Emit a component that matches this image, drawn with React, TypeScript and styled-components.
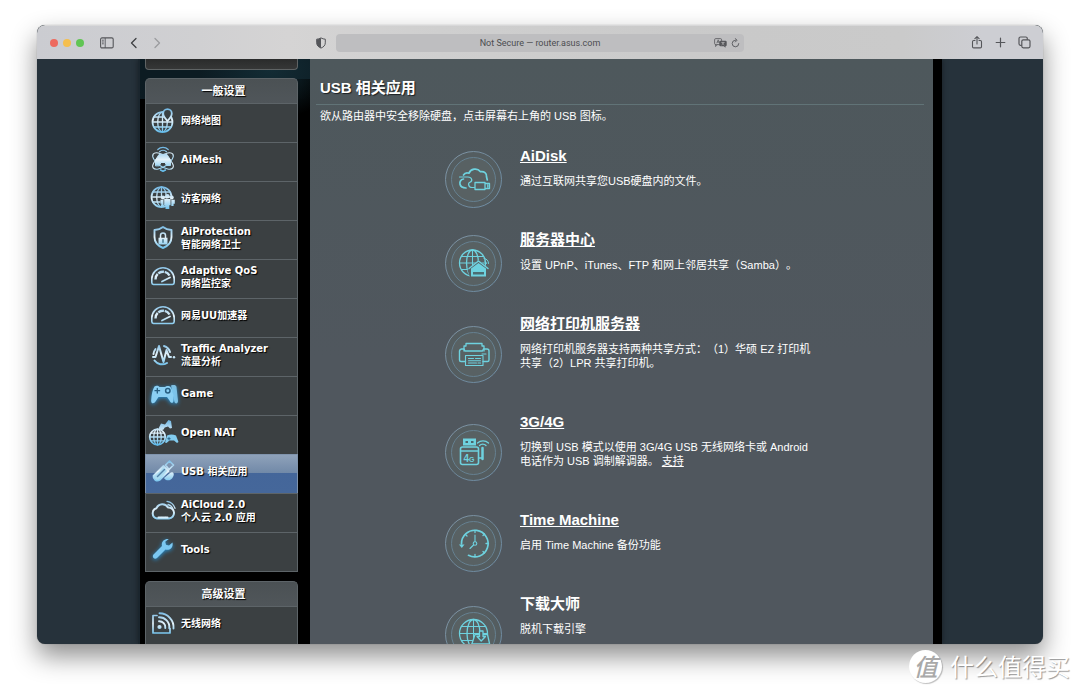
import React from "react";
import styled, { createGlobalStyle, css } from "styled-components";

const cjk = `"Noto Sans CJK SC", sans-serif`;

const GlobalStyle = createGlobalStyle`
  *, *::before, *::after { box-sizing: border-box; }
  html, body { margin: 0; background: #fff; }
  body { font-family: "Liberation Sans", Arial, ${cjk}; color: #fff; overflow: hidden; text-spacing-trim: space-all; }
  button { appearance: none; border: 0; padding: 0; background: none; color: inherit; font: inherit; cursor: pointer; }
  svg { display: block; }
`;

/* ---------- browser window ---------- */

const Desktop = styled.div`
  position: relative;
  display: flex;
  height: 100vh;
  padding: 25px 37px 49px;
`;

const BrowserWindow = styled.div`
  flex: 1;
  min-width: 0;
  display: flex;
  flex-direction: column;
  overflow: hidden;
  border-radius: 8px;
  background: #26323b;
  box-shadow: 0 0 1px rgba(0, 0, 0, 0.4), 0 12px 26px rgba(0, 0, 0, 0.45);
`;

const Toolbar = styled.header`
  flex: none;
  display: grid;
  grid-template-columns: 1fr minmax(0, 408px) 1fr;
  align-items: center;
  height: 34px;
  border-top: 1px solid #d8d8d9;
  border-radius: 8px 8px 0 0;
  background: linear-gradient(90deg, #cbccd1 0%, #d0d0d2 16%, #d5d4d4 25%, #cfcfcf 40%, #c9c9c9 70%, #cacaca 86%, #cdced3 94%);
  color: #55565a;
`;

const LeftTools = styled.div`
  display: flex;
  align-items: center;
  padding: 0 9px 0 13px;
`;

const Lights = styled.div`
  display: flex;
  gap: 5px;
  margin-right: 16px;
`;

const Light = styled.button<{ $color: string }>`
  width: 8px;
  height: 8px;
  border-radius: 50%;
  background: ${(p) => p.$color};
`;

const ToolButton = styled.button<{ $faded?: boolean }>`
  display: flex;
  align-items: center;
  justify-content: center;
  color: ${(p) => (p.$faded ? "#9b9c9f" : "inherit")};
`;

const NavButtons = styled.div`
  display: flex;
  gap: 11px;
  margin-left: 14px;
  margin-right: auto;
`;

const AddressBar = styled.div`
  display: grid;
  grid-template-columns: 30px 1fr 30px;
  align-items: center;
  height: 18px;
  border-radius: 4px;
  background: #bebec0;
`;

const AddressInput = styled.input`
  grid-column: 2;
  width: 100%;
  height: 18px;
  padding: 0;
  border: 0;
  outline: 0;
  background: transparent;
  color: #4c4d50;
  text-align: center;
  font: 9px Roboto, "Liberation Sans", sans-serif;
`;

const AddressActions = styled.div`
  display: flex;
  gap: 4px;
`;

const RightTools = styled.div`
  display: flex;
  justify-content: flex-end;
  align-items: center;
  gap: 12px;
  padding-right: 12px;
`;

/* ---------- router page ---------- */

const Page = styled.div`
  flex: 1;
  min-height: 0;
  overflow: hidden;
  display: flex;
  justify-content: center;
`;

const RouterLayout = styled.div`
  display: flex;
  align-items: flex-start;
  gap: 12px;
  width: 100%;
  max-width: 804px;
  padding: 0 9px 0 7px;
  border-left: 2px solid #1b262e;
  padding-left: 5px;
  background: radial-gradient(ellipse 70px 50px at 130px 10px, #132c35 0%, transparent 100%),
    linear-gradient(90deg, #0c1b22, #0c1b22) 0 0 / 180px 20px no-repeat,
    linear-gradient(90deg, #0c1b22, transparent 170px) 0 20px / 100% 20px no-repeat, #000;
  box-shadow: 0 0 6px rgba(0, 0, 0, 0.4);
`;

const Sidebar = styled.nav`
  flex: none;
  width: 153px;
`;

const QuickSetup = styled.div`
  height: 11px;
  margin-bottom: 8px;
  border: 1px solid #5f6364;
  border-top: 0;
  border-radius: 0 0 4px 4px;
  background: linear-gradient(#2a2b2b, #363737);
`;

const MenuGroup = styled.section`
  margin-bottom: 9px;
`;

const MenuHeading = styled.h2`
  height: 25px;
  margin: 0;
  padding-left: 4px;
  border: 1px solid #5d6468;
  border-bottom: 0;
  border-radius: 5px 5px 0 0;
  background: linear-gradient(#4b5154, #50565a);
  font: bold 11px/24px "Liberation Sans", ${cjk};
  text-align: center;
  text-shadow: 1px 1px 1px #000;
`;

const MenuList = styled.ul`
  margin: 0;
  padding: 0;
  list-style: none;
  border-bottom: 1px solid #5d6468;
`;

const MenuLink = styled.a<{ $active?: boolean }>`
  display: flex;
  align-items: center;
  gap: 5px;
  height: 39px;
  padding: 0 4px 5px 5px;
  border: 1px solid #5d6468;
  border-bottom: 0;
  background: #3b4042;
  color: #fff;
  text-decoration: none;
  white-space: nowrap;
  font: bold 10px/13px Verdana, "DejaVu Sans", ${cjk};
  text-shadow: 1px 1px 1px #000;
  ${(p) =>
    p.$active &&
    css`
      border-color: #8094ad;
      background: linear-gradient(#8fa2ba 0, #7189a8 47%, #44669a 47%, #45679a 100%);
    `}
`;

const Main = styled.main`
  flex: 1;
  min-width: 0;
  padding: 17px 9px 0 6px;
  background: linear-gradient(#4e585c, #50575e 300px);
`;

const PageTitle = styled.h1`
  margin: 0;
  padding: 0 4px 4px;
  border-bottom: 1px solid #617377;
  font-size: 15px;
  line-height: 24px;
  text-shadow: 1px 1px 1px #1c2022;
`;

const Intro = styled.p`
  margin: 3px 4px 15px;
  font-size: 11px;
  line-height: 16px;
`;

const Service = styled.section<{ $tall?: boolean }>`
  display: flex;
  align-items: center;
  gap: 18px;
  min-height: ${(p) => (p.$tall ? 98 : 84)}px;
  padding-left: 129px;
`;

const Emblem = styled.svg`
  flex: none;
  width: 57px;
  height: 57px;
  margin-bottom: 3px;
`;

const ServiceText = styled.div`
  align-self: flex-start;
  padding: 7px 0 35px;
  white-space: nowrap;
`;

const ServiceTitle = styled.h3`
  margin: 0 0 8px;
  font-size: 15px;
  line-height: 20px;
`;

const ServiceNote = styled.p`
  margin: 0;
  font-size: 11px;
  line-height: 14px;
`;

const TextLink = styled.a`
  color: inherit;
  text-decoration: underline;
`;

/* ---------- watermark ---------- */

const Watermark = styled.div`
  position: absolute;
  right: 10px;
  bottom: 10px;
  display: flex;
  align-items: center;
  gap: 8px;
  color: #fff;
  font: 400 24px/34px ${cjk};
  text-shadow: 1px 1px 1px rgba(0, 0, 0, 0.4);
`;

const Seal = styled.span`
  width: 33px;
  height: 33px;
  border-radius: 50%;
  background: #fff;
  box-shadow: 1px 1px 1px rgba(0, 0, 0, 0.25);
  color: #a9a9a9;
  font: italic 500 24px/32px ${cjk};
  text-align: center;
  text-shadow: none;
`;

/* ---------- menu icons ---------- */

const Globe = ({ x, y, r }: { x: number; y: number; r: number }) => (
  <g strokeWidth="1.3">
    <circle cx={x} cy={y} r={r} strokeWidth="1.7" />
    <ellipse cx={x} cy={y} rx={r * 0.48} ry={r} />
    <path d={`M${x} ${y - r}V${y + r}M${x - r} ${y}H${x + r}M${x - r * 0.86} ${y - r * 0.5}H${x + r * 0.86}M${x - r * 0.86} ${y + r * 0.5}H${x + r * 0.86}`} />
  </g>
);

const ink = "url(#menuInk)";
const hole = "#3b4042";

const menuArt: Record<string, React.ReactNode> = {
  map: (
    <>
      <Globe x={11.5} y={14} r={10} />
      <path d="M16.500 1.200a4.300 4.300 0 0 0-4.300 4.300c0 3 4.300 7.500 4.300 7.500s4.300-4.500 4.300-7.500a4.300 4.300 0 0 0-4.300-4.300z" fill={hole} strokeWidth="1.800" />
    </>
  ),
  mesh: (
    <>
      <path d="M8.500 4.700a5 5 0 0 1 7 0M6.800 2.500a7.500 7.500 0 0 1 10.400 0" strokeWidth="1.200" />
      <ellipse cx="12" cy="14" rx="12" ry="5.500" transform="rotate(35 12 14)" strokeWidth="1.100" />
      <ellipse cx="12" cy="14" rx="12" ry="5.500" transform="rotate(-35 12 14)" strokeWidth="1.100" />
      <path d="M4.500 18.500V13L8 7.500h8l3.500 5.500v5.500h-4l-1.500-3h-4l-1.500 3z" fill={ink} strokeWidth="1" />
      <path d="M9.500 23l2.500 1.200 2.500-1.200" />
    </>
  ),
  guest: (
    <>
      <Globe x={10.5} y={11} r={10} />
      <path d="M9.500 12.500h14v6h-14z" fill={hole} stroke="none" />
      <circle cx="12" cy="11.500" r="1.900" fill={ink} stroke="none" />
      <circle cx="20.800" cy="11.500" r="1.900" fill={ink} stroke="none" />
      <circle cx="16.400" cy="10.300" r="2.300" fill={ink} stroke="none" />
      <path d="M13.200 13h6.400v6.300h-1.300V23h-3.800v-3.700h-1.300zM9.500 13.800h3v6.200h-2v-2.200h-1zM20.300 13.800h3.500v4h-1.200V20h-2.300z" fill={ink} stroke="none" />
    </>
  ),
  shield: (
    <>
      <path d="M12 2c2.500 2 5 2.800 8.500 3v7c0 5-3.500 9-8.500 11-5-2-8.500-6-8.500-11V5C7 4.800 9.500 4 12 2z" strokeWidth="1.900" />
      <path d="M9.500 13v-2.500a2.500 2.500 0 0 1 5 0V13" strokeWidth="1.500" />
      <path d="M7.500 12.800h9v6.700h-9z" fill={ink} stroke="none" />
      <path d="M12 14.700v2.500" stroke="#47788f" strokeWidth="1.500" />
    </>
  ),
  gauge: (
    <>
      <path d="M2.500 20.500a2 2 0 0 1-1.700-2V15a11.200 11.200 0 0 1 22.400 0v3.500a2 2 0 0 1-1.700 2z" strokeWidth="1.600" />
      <path d="M4.500 15.500a7.500 7.500 0 0 1 14-4" strokeWidth="2.400" strokeDasharray="6 .8" strokeLinecap="butt" />
      <path d="M11 17.500l8-4" strokeWidth="1.800" />
    </>
  ),
  traffic: (
    <>
      <path d="M13 4a9 9 0 0 1 6 6M4.500 7A9.500 9.500 0 0 0 2.500 12M3.500 18.500A9.500 9.500 0 0 0 16 21" strokeWidth="2" />
      <path d="M2 15h2.500L8 4l4.500 16 3-12 2.500 7h2" strokeWidth="2" />
      <circle cx="23" cy="15.200" r="1.200" fill={ink} stroke="none" />
    </>
  ),
  game: (
    <g fill="#8bd0f4" stroke="none">
      <path d="M20 4.500c3-1 5-.5 5.500 1.500l1.500 14c0 3-3 3-3.500 1L22 15z" opacity=".85" />
      <path d="M3.500 5.500c2-1.200 4-.6 5 .5h5.500c1-1.100 4-1.700 5.500 0C22 10 23 15 22.500 20c-.5 3-3 2-4-.5L16 16H7.500L4.500 20.500C3 23-.2 23 .2 19c.3-5 1.300-10.500 3.300-13.500z" />
      <path d="M6.300 7.500v4.500M4 9.700h4.600" stroke="#285f82" strokeWidth="1.300" />
      <circle cx="16.800" cy="9.800" r="2.200" fill="none" stroke="#285f82" />
    </g>
  ),
  nat: (
    <>
      <Globe x={6.5} y={17} r={7.8} />
      <path d="M7.500 8.500l2.500-5 4 1L17.500 0 20 1l1 7-2 .5-2-2-3.200 1-1.500 2.300-2 .2z" fill={ink} stroke="none" />
      <path d="M16 15.500c3-1.500 6-1.500 9 0l2.500 6.500-1.500 1-3-2.500h-4.500L15.500 23l-1.500-.5z" fill="#82ccef" stroke="none" />
      <path d="M18 17.500v2.400M16.800 18.700h2.400" stroke="#285f82" strokeWidth=".9" />
    </>
  ),
  usb: (
    <>
      <path d="M2.500 17l10-10 5 5-9 9a4 4 0 0 1-6-4z" fill="#a9daf0" strokeWidth="1.800" />
      <path d="M14.500 6l4-4 4 4-4.500 4.500z" strokeWidth="1.700" />
      <path d="M6.500 17.500l7-7" stroke="#5481a8" strokeWidth="1.500" />
      <path d="M13 19l6-5c3-2 5 1 3 4-2 4-7 4.500-9 1z" fill={ink} stroke="none" />
    </>
  ),
  cloud: (
    <>
      <path d="M6 20.500a5.300 5.300 0 0 1-.5-10.300A6.500 6.500 0 0 1 17 9.500a5.500 5.500 0 0 1 1 11z" strokeWidth="2" />
      <path d="M7.500 19.500h9" stroke="#d8eefa" strokeWidth="2.200" strokeDasharray="3 .6" />
      <path d="M17 6.500a7 7 0 0 1 5 5M16 3.300a10 10 0 0 1 8 7" strokeWidth="1.300" />
    </>
  ),
  tools: (
    <path d="M21.500 5.500l-3.500 3-3-.8-.7-2.900L17.800 2C13 1.500 10 5 11 9L2.500 17.500c-2 2.500 1 5.500 3.500 3.500l8.500-8.500c4.500 1 8-2 7-7z" fill="#7bc8f2" stroke="none" />
  ),
  wifi: (
    <>
      <path d="M6 4.500H2v17.500h17v-4.500" strokeWidth="1.700" />
      <circle cx="8.500" cy="16" r="2.100" fill={ink} stroke="none" />
      <path d="M8 10.300a6 6 0 0 1 6.300 6.700M8 6.300a10 10 0 0 1 10.300 11M8.500 2.300A14 14 0 0 1 22.500 17.500" strokeWidth="1.900" />
    </>
  ),
};

const IconFrame = styled.svg<{ $glow: boolean }>`
  flex: none;
  width: 25px;
  height: 25px;
  overflow: visible;
  filter: ${(p) => (p.$glow ? "drop-shadow(0 1px 2px #2593d8)" : "none")};
`;

const MenuIcon = ({ name }: { name: string }) => (
  <IconFrame viewBox="0 0 25 25" fill="none" stroke={ink} strokeWidth="1.500" strokeLinecap="round" strokeLinejoin="round" $glow={name === "game" || name === "tools"} aria-hidden="true">
    {menuArt[name]}
  </IconFrame>
);

/* ---------- service emblems ---------- */

const cyan = "#6ed2df";

const emblemArt: Record<string, React.ReactNode> = {
  disk: (
    <>
      <path d="M18.500 24c1-1.800 3-2.500 5.500-1.800 1.500-4.200 8-6 11.500-1.500 3.500-.7 6.500 1.500 6 5l.8 3.300" strokeWidth="1.700" />
      <path d="M14.500 26h8.500c4 0 5 4 2 5.200-2.500 1-1.500 5.300 2 5.300h2.500" strokeWidth="1.200" />
      <path d="M18.500 28c-3 .5-4 3-3.500 5.300.6 2.500 3 3.700 6 3.700" strokeWidth="1.700" />
      <path d="M30 31.500h10v7H30zM40 32.500h4.500v5H40M42.800 34v2" />
    </>
  ),
  server: (
    <>
      <circle cx="27.500" cy="28" r="13" />
      <ellipse cx="27.500" cy="28" rx="6" ry="13" />
      <path d="M27.500 15v26M14.500 28h26M16.500 21.500h22M16.500 34.500h22" strokeWidth="1" />
      <path d="M22.500 35l11.500-10 11 10v7.500H25z" fill="#555f62" stroke="none" />
      <path d="M24 33.500l9.500-7.500 9.500 7.500" strokeWidth="1.500" />
      <path d="M26 33.500l7.500-5.500 7.500 5.500v8H26z" fill={cyan} stroke="none" />
      <path d="M28 37h11v2.500H28z" fill="#4b6d73" stroke="none" />
      <path d="M39 23.500a5 5 0 0 1 4.500 5M39.500 26a3 3 0 0 1 2 2.500" strokeWidth="1" />
    </>
  ),
  printer: (
    <>
      <path d="M19 25v-5h2v-2.500h16V20h2v5" />
      <path d="M20.500 35.500H16a1.500 1.500 0 0 1-1.500-1.500V25a2.500 2.500 0 0 1 2-2H19l1 2h17.500l1-2H42a2 2 0 0 1 2 2v9a1.500 1.500 0 0 1-1.500 1.500H38" strokeWidth="1.400" />
      <path d="M20.500 29.500h17.500v10H20.500zM23.500 32.500h5M30.500 32.500h5M23.500 34.800h12M23.500 37h8M33 37h2.500M37 28h4" strokeWidth="1.100" />
    </>
  ),
  modem: (
    <>
      <path d="M18 14.500h13v7H18z" fill={cyan} stroke="none" />
      <path d="M20.500 17h2.500v2h-2.500zM26 17h2.500v2H26z" fill="#4b666c" stroke="none" />
      <rect x="15.500" y="23" width="18" height="17.500" rx="2" strokeWidth="1.600" />
      <path d="M15.500 27h18" />
      <path d="M33.500 34h4" />
      <path d="M37.500 24v11" strokeWidth="2.500" />
      <path d="M34.500 21.500a4.500 4.500 0 0 1 6.500 0M32.500 19a8 8 0 0 1 11 0" />
      <text x="18.500" y="37.500" fill={cyan} stroke="none" fontFamily="Liberation Sans, sans-serif" fontWeight="700" fontSize="10">4<tspan fontSize="7">G</tspan></text>
    </>
  ),
  clock: (
    <>
      <path d="M16.500 29a13.300 13.300 0 1 1 7 11.300" strokeWidth="1.700" />
      <path d="M14 29.500h5.500l-2.700 3.500z" fill={cyan} stroke="none" />
      <circle cx="30" cy="28.500" r="1.800" strokeWidth="1.100" />
      <path d="M30 26.500V20M28.500 30l-3.500 3.500" strokeWidth="1.100" />
      <path d="M30 15.500v2M30 39.500v2M41 28.500h2.500M20.500 19.500l1.500 1.500M39.500 19l-1.500 1.500M39.500 38l-1.500-1.500" strokeWidth="1.300" />
    </>
  ),
  download: (
    <>
      <circle cx="28.500" cy="27.500" r="14" />
      <ellipse cx="28.500" cy="27.500" rx="6.500" ry="14" />
      <path d="M28.500 13.500v28M14.500 27.500h28M17 20.500h23M17 34.500h23" strokeWidth="1" />
      <path d="M30 28.500h12.500l2 9v5H27v-5z" fill="#555f62" />
      <path d="M34.500 25h3.500v5.500h2.500L36.200 35 32 30.500h2.500z" fill="#555f62" />
      <path d="M27 38h17.500" />
    </>
  ),
};

const ServiceEmblem = ({ name }: { name: string }) => (
  <Emblem viewBox="0 0 57 57" fill="none" aria-hidden="true">
    <circle cx="28.500" cy="28.500" r="28" fill="#545d60" stroke="url(#ringInk)" />
    <circle cx="28.500" cy="28.500" r="22" fill="#586163" stroke="#668191" />
    <g stroke={cyan} strokeWidth="1.300" strokeLinecap="round" strokeLinejoin="round">
      {emblemArt[name]}
    </g>
  </Emblem>
);

const InkDefs = styled.svg`
  position: absolute;
`;

const SharedInks = () => (
  <InkDefs width="0" height="0" aria-hidden="true">
    <defs>
      <linearGradient id="menuInk" gradientUnits="userSpaceOnUse" x1="0" y1="0" x2="0" y2="25">
        <stop offset="0" stopColor="#6bb4e2" />
        <stop offset=".5" stopColor="#e4f2fa" />
        <stop offset="1" stopColor="#5cb9ea" />
      </linearGradient>
      <linearGradient id="ringInk" x1="0" y1="0" x2="1" y2="1">
        <stop offset="0" stopColor="#8499a9" />
        <stop offset=".5" stopColor="#6d8698" />
        <stop offset="1" stopColor="#7291a9" />
      </linearGradient>
    </defs>
  </InkDefs>
);

/* ---------- data ---------- */

type Item = { icon: string; lines: string[]; active?: boolean };

const generalItems: Item[] = [
  { icon: "map", lines: ["网络地图"] },
  { icon: "mesh", lines: ["AiMesh"] },
  { icon: "guest", lines: ["访客网络"] },
  { icon: "shield", lines: ["AiProtection", "智能网络卫士"] },
  { icon: "gauge", lines: ["Adaptive QoS", "网络监控家"] },
  { icon: "gauge", lines: ["网易UU加速器"] },
  { icon: "traffic", lines: ["Traffic Analyzer", "流量分析"] },
  { icon: "game", lines: ["Game"] },
  { icon: "nat", lines: ["Open NAT"] },
  { icon: "usb", lines: ["USB 相关应用"], active: true },
  { icon: "cloud", lines: ["AiCloud 2.0", "个人云 2.0 应用"] },
  { icon: "tools", lines: ["Tools"] },
];

const advancedItems: Item[] = [{ icon: "wifi", lines: ["无线网络"] }];

const services: { icon: string; title: string; note: React.ReactNode; plain?: boolean }[] = [
  { icon: "disk", title: "AiDisk", note: "通过互联网共享您USB硬盘内的文件。" },
  { icon: "server", title: "服务器中心", note: "设置 UPnP、iTunes、FTP 和网上邻居共享（Samba）。" },
  { icon: "printer", title: "网络打印机服务器", note: <>网络打印机服务器支持两种共享方式：（1）华硕 EZ 打印机<br />共享（2）LPR 共享打印机。</> },
  { icon: "modem", title: "3G/4G", note: <>切换到 USB 模式以使用 3G/4G USB 无线网络卡或 Android<br />电话作为 USB 调制解调器。 <TextLink href="#support">支持</TextLink></> },
  { icon: "clock", title: "Time Machine", note: "启用 Time Machine 备份功能" },
  { icon: "download", title: "下载大师", note: "脱机下载引擎", plain: true },
];

const Menu = ({ title, items }: { title: string; items: Item[] }) => (
  <MenuGroup>
    <MenuHeading>{title}</MenuHeading>
    <MenuList>
      {items.map((item) => (
        <li key={item.lines[0]}>
          <MenuLink href={`#${item.icon}`} $active={item.active}>
            <MenuIcon name={item.icon} />
            <span>
              {item.lines.map((line, i) => (
                <React.Fragment key={line}>
                  {i > 0 && <br />}
                  {line}
                </React.Fragment>
              ))}
            </span>
          </MenuLink>
        </li>
      ))}
    </MenuList>
  </MenuGroup>
);

const BrowserToolbar = () => (
  <Toolbar>
    <LeftTools>
      <Lights>
        <Light $color="#ed6a5f" aria-label="Close" />
        <Light $color="#f5bf4f" aria-label="Minimize" />
        <Light $color="#61c554" aria-label="Zoom" />
      </Lights>
      <ToolButton aria-label="Sidebar">
        <svg width="14" height="12" viewBox="0 0 14 12" fill="none" stroke="currentColor">
          <rect x=".6" y=".9" width="12.600" height="10" rx="1.400" strokeWidth="1.100" />
          <path d="M5.200 1v10M2 3.200h1.800M2 5h1.800M2 6.800h1.800" strokeWidth=".9" />
        </svg>
      </ToolButton>
      <NavButtons>
        <ToolButton aria-label="Back">
          <svg width="12" height="12" viewBox="0 0 12 12" fill="none" stroke="#3f4043" strokeWidth="1.300" strokeLinecap="round" strokeLinejoin="round"><path d="M8 1.500L3.500 6 8 10.500" /></svg>
        </ToolButton>
        <ToolButton aria-label="Forward" $faded>
          <svg width="12" height="12" viewBox="0 0 12 12" fill="none" stroke="currentColor" strokeWidth="1.300" strokeLinecap="round" strokeLinejoin="round"><path d="M4 1.500L8.500 6 4 10.500" /></svg>
        </ToolButton>
      </NavButtons>
      <ToolButton aria-label="Privacy report">
        <svg width="12" height="12" viewBox="0 0 12 12">
          <path d="M6 .9c1.500.9 2.800 1.200 4.300 1.300v3.600c0 2.500-1.600 4.200-4.300 5.300C3.300 10 1.700 8.300 1.700 5.800V2.200C3.200 2.100 4.500 1.800 6 .9z" fill="none" stroke="currentColor" />
          <path d="M6 .9C4.500 1.800 3.200 2.100 1.700 2.200v3.600c0 2.500 1.600 4.200 4.300 5.300z" fill="currentColor" />
        </svg>
      </ToolButton>
    </LeftTools>
    <AddressBar>
      <AddressInput aria-label="Address" defaultValue="Not Secure — router.asus.com" />
      <AddressActions>
        <ToolButton aria-label="Translate">
          <svg width="13" height="10" viewBox="0 0 13 10">
            <rect x=".6" y=".6" width="7" height="6" rx="1.200" fill="none" stroke="currentColor" strokeWidth=".8" />
            <path d="M1.500 6.500v2L3.500 6.700M2.800 5.200l1.400-3.400 1.200 3.400M3.300 4h1.800" fill="none" stroke="currentColor" strokeWidth=".7" />
            <path d="M6.500 2.800h5a1.200 1.200 0 0 1 1.200 1.200v3a1.200 1.200 0 0 1-1.200 1.200v1.500L9.800 8.200H6.500A1.200 1.200 0 0 1 5.300 7V4a1.200 1.200 0 0 1 1.200-1.200z" fill="currentColor" />
            <path d="M7.300 4.500h3.400M9 3.800v.7M10 4.700L7.600 7M8 4.800l2.300 2.200" stroke="#bebec0" strokeWidth=".6" />
          </svg>
        </ToolButton>
        <ToolButton aria-label="Reload">
          <svg width="9" height="10" viewBox="0 0 9 10" fill="none" stroke="currentColor" strokeWidth=".9" strokeLinecap="round"><path d="M4.500 2.200A3.300 3.300 0 1 0 7.800 5.600M4.200.6l1.900 1.600-1.700 1.700" /></svg>
        </ToolButton>
      </AddressActions>
    </AddressBar>
    <RightTools>
      <ToolButton aria-label="Share">
        <svg width="12" height="13" viewBox="0 0 12 13" fill="none" stroke="currentColor" strokeWidth="1.100" strokeLinecap="round" strokeLinejoin="round"><path d="M4 4.500H2.700a1.200 1.200 0 0 0-1.200 1.200v5a1.200 1.200 0 0 0 1.200 1.200h6.600a1.200 1.200 0 0 0 1.200-1.200v-5a1.200 1.200 0 0 0-1.200-1.200H8M6 8V.8M3.900 2.700L6 .7l2.100 2" /></svg>
      </ToolButton>
      <ToolButton aria-label="New tab">
        <svg width="11" height="11" viewBox="0 0 11 11" fill="none" stroke="currentColor" strokeWidth="1.200" strokeLinecap="round"><path d="M5.500 1.200v8.600M1.200 5.500h8.600" /></svg>
      </ToolButton>
      <ToolButton aria-label="Tabs">
        <svg width="13" height="13" viewBox="0 0 13 13" fill="none" stroke="currentColor" strokeWidth="1.200"><rect x="3.800" y="3.800" width="8.200" height="8" rx="1.500" /><path d="M3.800 9.300H2.500A1.500 1.500 0 0 1 1 7.800V2.500A1.500 1.500 0 0 1 2.500 1h5.300a1.500 1.500 0 0 1 1.500 1.500v1.300" /></svg>
      </ToolButton>
    </RightTools>
  </Toolbar>
);

export default function App() {
  return (
    <>
      <GlobalStyle />
      <SharedInks />
      <Desktop>
        <BrowserWindow>
          <BrowserToolbar />
          <Page>
            <RouterLayout>
              <Sidebar>
                <QuickSetup />
                <Menu title="一般设置" items={generalItems} />
                <Menu title="高级设置" items={advancedItems} />
              </Sidebar>
              <Main>
                <PageTitle>USB 相关应用</PageTitle>
                <Intro>欲从路由器中安全移除硬盘，点击屏幕右上角的 USB 图标。</Intro>
                {services.map((s) => (
                  <Service key={s.icon} $tall={s.plain}>
                    <ServiceEmblem name={s.icon} />
                    <ServiceText>
                      <ServiceTitle>{s.plain ? s.title : <TextLink href={`#${s.icon}`}>{s.title}</TextLink>}</ServiceTitle>
                      <ServiceNote>{s.note}</ServiceNote>
                    </ServiceText>
                  </Service>
                ))}
              </Main>
            </RouterLayout>
          </Page>
        </BrowserWindow>
        <Watermark>
          <Seal>值</Seal>
          <span>什么值得买</span>
        </Watermark>
      </Desktop>
    </>
  );
}
